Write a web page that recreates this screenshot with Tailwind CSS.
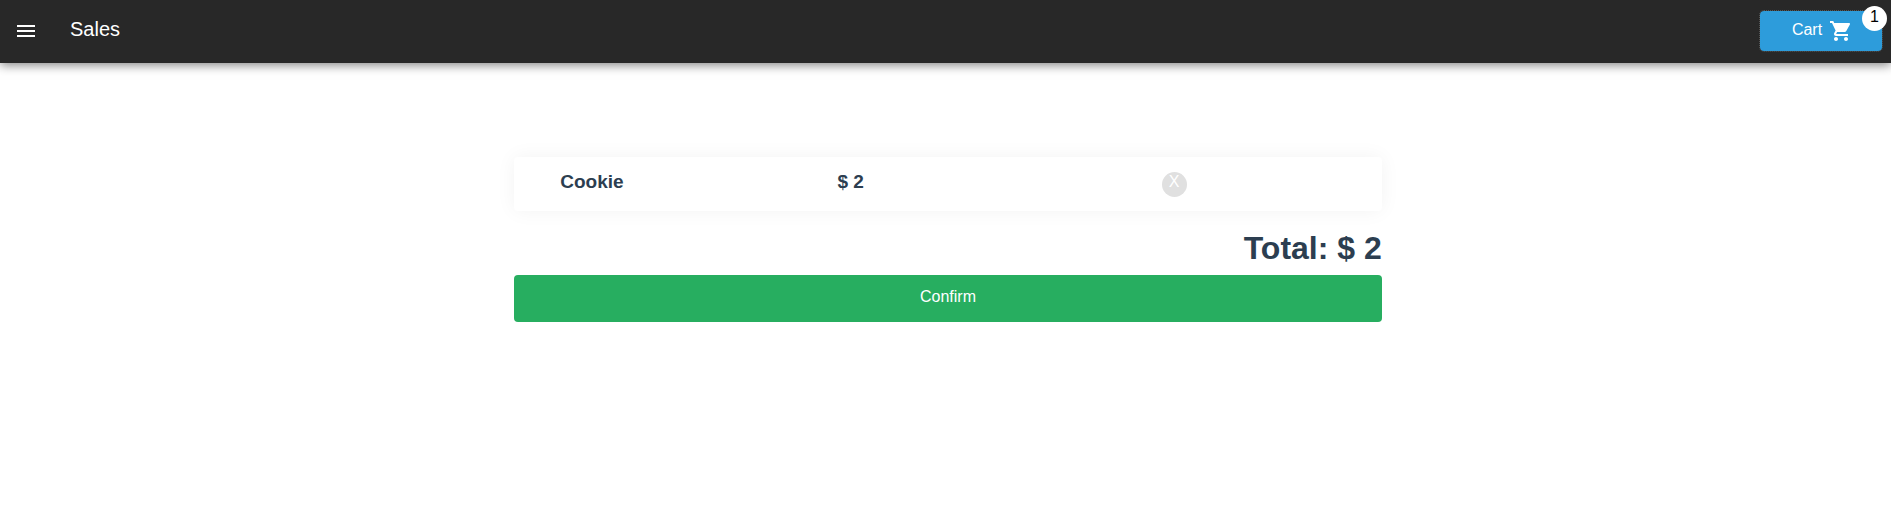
<!DOCTYPE html>
<html lang="en">
<head>
<meta charset="utf-8">
<meta name="viewport" content="width=device-width, initial-scale=1">
<title>Sales</title>
<script src="https://cdn.jsdelivr.net/npm/@tailwindcss/browser@4"></script>
</head>
<body class="min-h-screen bg-white font-['Liberation_Sans',Arial,sans-serif] text-base text-[#2c3e50]">
<header class="flex h-[63px] items-center bg-[#282828] pr-[9px] pb-px pl-[14px] text-white shadow-[0_2px_10px_rgba(0,0,0,0.5)]">
  <button type="button" aria-label="Menu" class="mr-8">
    <svg class="block size-6" viewBox="0 0 24 24" fill="currentColor" shape-rendering="crispEdges"><path d="M3 6h18v2H3zM3 11h18v2H3zM3 16h18v2H3z"/></svg>
  </button>
  <h1 class="pb-1 text-xl">Sales</h1>
  <button type="button" class="relative ml-auto flex h-10 w-[122px] items-center justify-center gap-2 rounded bg-[#2d9cdb] pl-0.5 outline-1 outline-dotted outline-[#555]">
    <span class="pb-0.5">Cart</span>
    <svg class="block size-[22px]" viewBox="1 1 22 22" fill="currentColor"><path d="M7 18c-1.100 0-1.990.9-1.990 2S5.900 22 7 22s2-.9 2-2-.9-2-2-2zM1 2v2h2l3.600 7.590-1.350 2.450c-.16.28-.25.610-.25.960 0 1.100.9 2 2 2h12v-2H7.420c-.14 0-.25-.11-.25-.25l.03-.12.900-1.630h7.450c.75 0 1.410-.41 1.750-1.030l3.580-6.490c.08-.14.120-.31.120-.48 0-.55-.45-1-1-1H5.210l-.94-2H1zm16 16c-1.100 0-1.990.9-1.990 2s.89 2 1.990 2 2-.9 2-2-.9-2-2-2z"/></svg>
    <span class="absolute -top-[5px] -right-[5px] flex size-[25px] items-center justify-center rounded-full bg-white pb-1 text-black">1</span>
  </button>
</header>
<div class="pt-[94px] pl-[5px]">
<main class="mx-auto w-[46%]">
  <section class="grid h-[54px] grid-cols-[277fr_324fr_220fr] items-center rounded bg-white pl-[46px] shadow-[0_0_20px_rgba(0,0,0,0.05)]">
    <h3 class="pb-1 text-[19px] font-bold">Cookie</h3>
    <h3 class="pb-1 text-[19px] font-bold">$ 2</h3>
    <button type="button" aria-label="Remove Cookie" class="flex size-[25px] items-center justify-center rounded-full bg-[#e0e0e0] pb-1 text-white">X</button>
  </section>
  <h2 class="mt-[17px] text-right text-[32px] leading-10 font-bold">Total: $ 2</h2>
  <button type="button" class="mt-[7px] block h-[47px] w-full rounded bg-[#27ae60] pb-1 text-white">Confirm</button>
</main>
</div>
</body>
</html>
